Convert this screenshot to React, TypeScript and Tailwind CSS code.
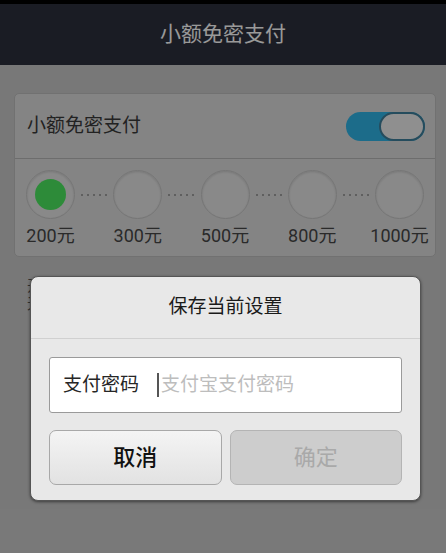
const amounts = ["200元", "300元", "500元", "800元", "1000元"];

const Dots = () => (
  <div className="flex flex-1 items-center justify-center gap-[4px]">
    {[0, 1, 2, 3, 4].map((i) => (
      <span key={i} className="h-[2px] w-[2px] rounded-full bg-[#8a8a8a]" />
    ))}
  </div>
);

export default function App() {
  const selected = 0;

  return (
    <div
      className="relative h-[553px] w-[446px] overflow-hidden bg-[#c9c9c9]"
      style={{ fontFamily: "Roboto, 'Noto Sans CJK SC', sans-serif" }}
    >
      {/* 顶部状态栏 */}
      <div className="h-[4px] bg-black" />
      <header className="flex h-[61px] items-center justify-center bg-[#2c2f3c]">
        <h1 className="text-[21px] text-white">小额免密支付</h1>
      </header>

      <div className="ml-[14px] mr-[10px] mt-[28px] rounded-[5px] border border-[#bcbcbc] bg-[#dcdcdc]">
        <div className="flex h-[64px] items-center justify-between pl-[12px] pr-[10px]">
          <span className="text-[19px] text-[#3a3a3a]">小额免密支付</span>
          {/* 开关 */}
          <div className="flex h-[29px] w-[79px] items-center justify-end rounded-full bg-[#30b4e6]">
            <div className="h-[29px] w-[46px] rounded-full border-2 border-[#3f7f9c] bg-[#eeeeee]" />
          </div>
        </div>
        <div className="h-px bg-[#b6b6b6]" />
        <div className="px-[11px] pb-[9px] pt-[11px]">
          <div className="flex items-center">
            {amounts.map((a, i) => (
              <div key={a} className="contents">
                <div className="flex h-[49px] w-[49px] shrink-0 items-center justify-center rounded-full border border-[#c4c4c4] bg-[#e4e4e4] shadow-[inset_0_1px_2px_rgba(0,0,0,0.12)]">
                  {i === selected && (
                    <div className="h-[31px] w-[31px] rounded-full bg-[#4ce860]" />
                  )}
                </div>
                {i < amounts.length - 1 && <Dots />}
              </div>
            ))}
          </div>
          <div className="mt-[6px] flex justify-between">
            {amounts.map((a) => (
              <div key={a} className="flex w-[49px] justify-center">
                <span className="whitespace-nowrap text-[18px] leading-[22px] text-[#474747]">
                  {a}
                </span>
              </div>
            ))}
          </div>
        </div>
      </div>

      <div className="ml-[27px] mt-[20px] text-[15px] leading-[18px] text-[#555]">
        <p>开通后，单笔支付金额小于设定额度时，</p>
        <p>无需输入支付密码。</p>
      </div>

      {/* 遮罩 */}
      <div className="absolute inset-0 bg-black/40" />

      {/* 对话框 */}
      <div className="absolute left-[30px] top-[276px] w-[391px] rounded-[8px] border border-[#555] bg-[#e8e8e8] shadow-[0_1px_3px_rgba(0,0,0,0.5)]">
        <div className="flex h-[61px] items-center justify-center">
          <span className="text-[19px] text-[#1a1a1a]">保存当前设置</span>
        </div>
        <div className="h-px bg-[#d0d0d0]" />
        <div className="px-[18px] pb-[15px] pt-[18px]">
          <div className="flex h-[56px] items-center rounded-[3px] border border-[#9a9a9a] bg-white pl-[13px]">
            <span className="text-[19px] text-[#262626]">支付密码</span>
            <span className="ml-[18px] h-[24px] w-[2px] bg-[#555]" />
            <span className="ml-[2px] text-[19px] text-[#bdbdbd]">支付宝支付密码</span>
          </div>
          <div className="mt-[17px] flex gap-[8px]">
            <button className="flex h-[55px] flex-1 items-center justify-center rounded-[7px] border border-[#a8a8a8] bg-gradient-to-b from-[#f4f4f4] to-[#e2e2e2] text-[22px] font-medium text-[#111]">
              取消
            </button>
            <button className="flex h-[55px] flex-1 items-center justify-center rounded-[7px] border border-[#b4b4b4] bg-[#cdcdcd] text-[22px] text-[#a9a9a9]">
              确定
            </button>
          </div>
        </div>
      </div>
    </div>
  );
}
